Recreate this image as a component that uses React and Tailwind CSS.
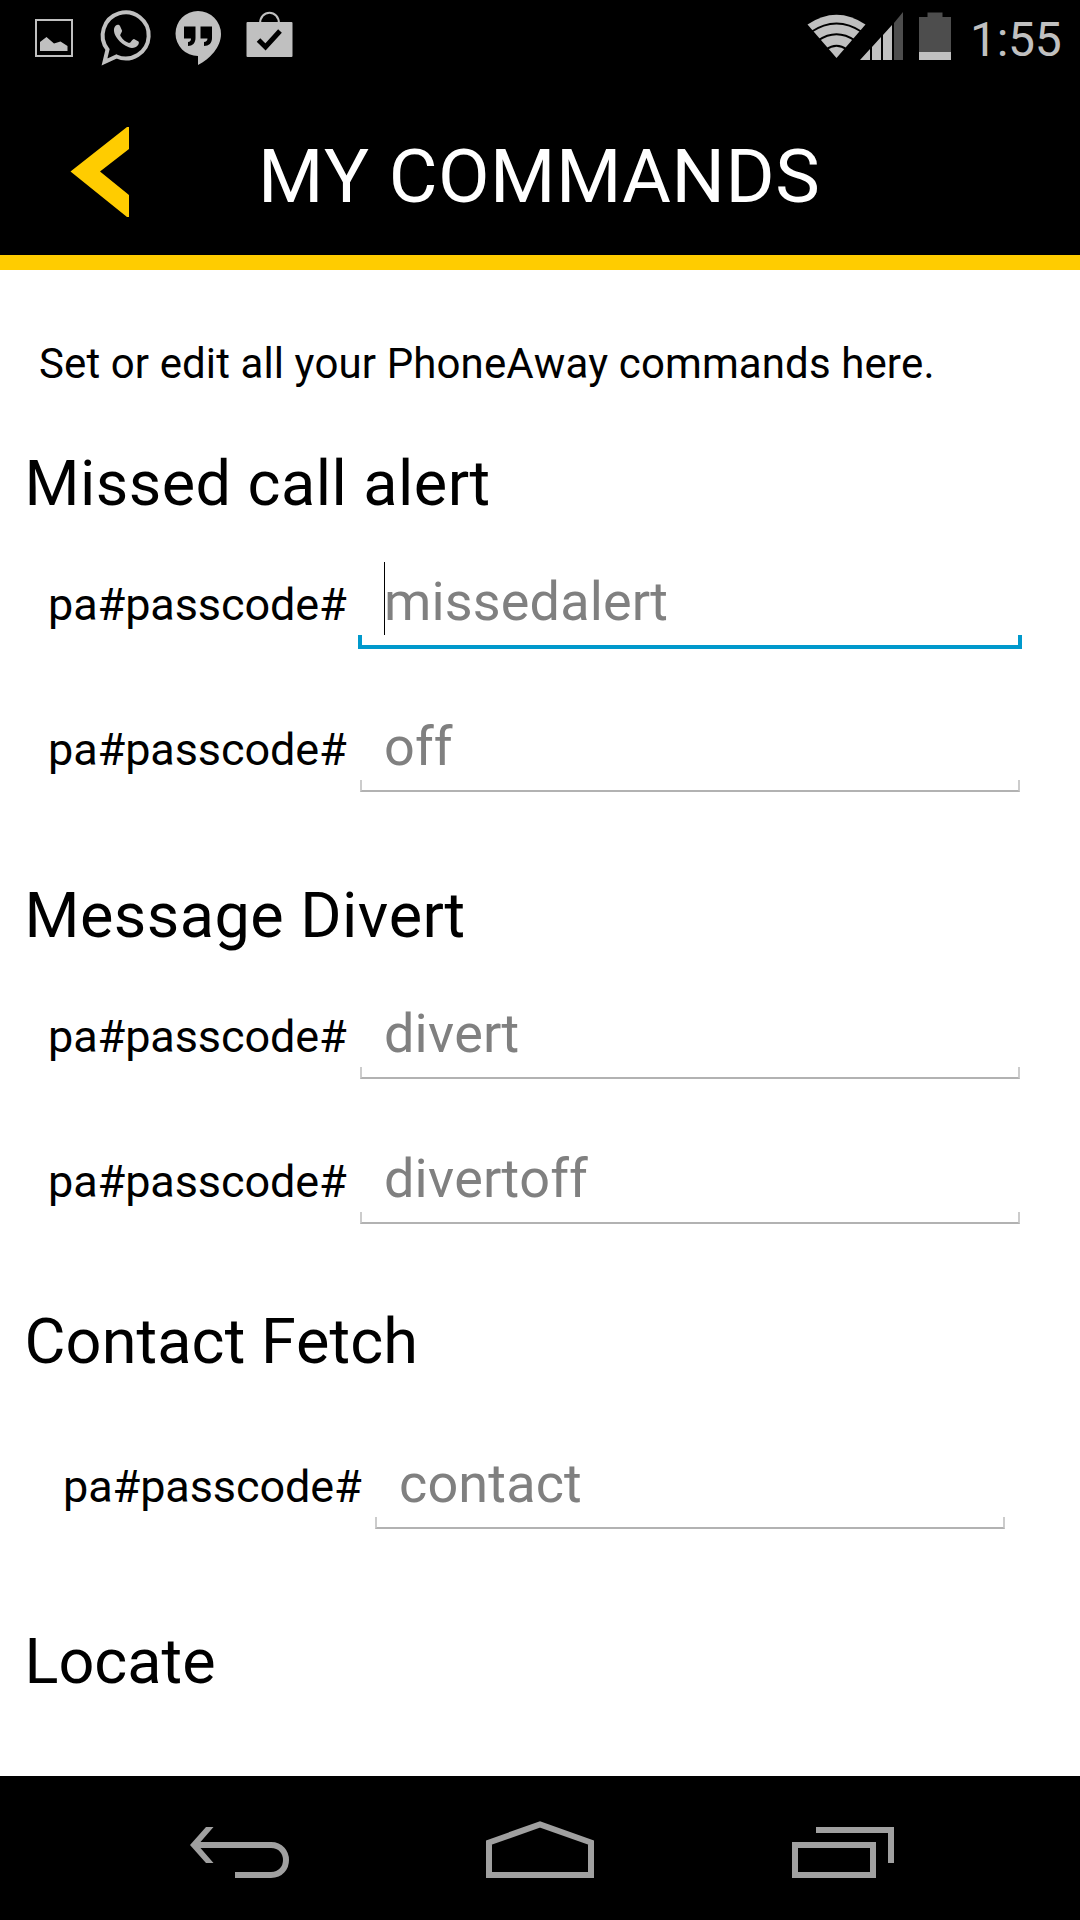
const GROUPS = [
  {
    title: "Missed call alert",
    className: "pt-[38px] tracking-[0.45px]",
    rows: [
      { hint: "missedalert", focused: true, className: "h-[145px]" },
      { hint: "off", className: "h-[145px]" },
    ],
  },
  {
    title: "Message Divert",
    className: "pt-[18px] tracking-[0.45px]",
    rows: [
      { hint: "divert", className: "h-[145px]" },
      { hint: "divertoff", className: "h-[145px]" },
    ],
  },
  {
    title: "Contact Fetch",
    className: "pt-[12px] tracking-[0.1px]",
    rows: [{ hint: "contact", inset: true, className: "h-[169px] pt-[24px]" }],
  },
  { title: "Locate", className: "pt-[27px]", rows: [] },
];

function StatusBar() {
  return (
    <div className="h-[75px] flex items-center justify-between">
      <svg width="320" height="75" viewBox="0 0 320 75" fill="#c0c0c0">
        {/* gallery */}
        <rect x="36" y="20" width="36" height="36" fill="none" stroke="#c0c0c0" strokeWidth="2" />
        <path d="M40 51V42L46.500 37L54 43.500L60.500 41.500L67.500 46V51Z" />
        {/* whatsapp */}
        <path
          d="M104.500 62L107.500 49.500A23 23 0 1 1 116.500 56.500Z"
          fill="none"
          stroke="#c0c0c0"
          strokeWidth="4"
        />
        <path d="M114 29C115 24 119 24 120 26L122 30.500C122.500 32 119.500 34.500 120.500 36C123 40 126 42 129 43C131 43 132 39 134 39L138.500 41.500C140 43.500 137 48 132 48C124 47 113 37 114 29Z" />
        {/* hangouts */}
        <path
          fillRule="evenodd"
          d="M198 11A23 23 0 0 1 221 34C221 47 210 59 198 65V56A22.500 22.500 0 0 1 198 11ZM184 26.500H195.500V38C195.500 43 192.500 46 188 46V42C190 42 191 40.500 191 38.500H184V26.500ZM200.500 26.500H212V38C212 43 209 46 204 46V42C206 42 207.500 40.500 207.500 38.500H200.500Z"
        />
        {/* play store bag */}
        <path d="M260 24C260 9 279 9 279 24" fill="none" stroke="#c0c0c0" strokeWidth="2" />
        <rect x="246.500" y="22" width="46" height="35" rx="1" />
        <path d="M258.500 40L265.500 47L280 31" fill="none" stroke="#000" strokeWidth="5" />
      </svg>
      <div className="flex items-center">
        <svg width="155" height="75" viewBox="800 0 155 75" fill="#c0c0c0">
          <path d="M836.500 58L807.500 24.500Q836.500 5 865.500 24.500Z" />
          <g fill="none" stroke="#000" strokeWidth="2">
            <path d="M811 32Q836.500 15 862 32" />
            <path d="M818 40.500Q836.500 28 855 40.500" />
            <path d="M826 49.500Q836.500 42 847 49.500" />
          </g>
          <path d="M860 60L870 49V60ZM872 60V47L881 37V60ZM883 60V35L892 25V60Z" />
          <path d="M894 60V23L903 12V60Z" fill="#4d4d4d" />
          <path d="M919 52V17H927.500V12.500H942.500V17H951V52Z" fill="#4d4d4d" />
          <rect x="919" y="52" width="32" height="8" />
        </svg>
        <span className="w-[125px] pl-[15px] pt-[3px] text-[48px] leading-[75px] tracking-[-0.3px] text-[#c0c0c0]">1:55</span>
      </div>
    </div>
  );
}

function Header() {
  return (
    <div className="h-[195px] bg-black border-b-[15px] border-[#ffcc00] grid grid-cols-[258px_1fr]">
      <svg width="258" height="180" viewBox="0 75 258 180">
        <path d="M70.500 171.500L127 127H129V149L100 171.500L129 195V217H127Z" fill="#ffcc00" />
      </svg>
      <h1 className="text-white text-[75px] leading-[88px] tracking-[0.5px] pt-[57px] whitespace-nowrap">MY COMMANDS</h1>
    </div>
  );
}

function CommandRow({ row }) {
  return (
    <div className={"flex " + row.className + (row.inset ? " pl-[63px] pr-[75px]" : " pl-[48px] pr-[60px]")}>
      <span className="w-[310px] text-[45px] leading-[54px] tracking-[-0.1px] pt-[27px] whitespace-nowrap">
        pa#passcode#
      </span>
      <div className="relative flex-1 h-[96px]">
        <div className="pl-[26px] pt-[15px] text-[54px] leading-[72px] tracking-[0.15px] text-[#808080] whitespace-nowrap">
          {row.hint}
        </div>
        {row.focused && <div className="absolute left-[26px] top-[11px] w-px h-[73px] bg-black" />}
        {row.focused ? (
          <div className="absolute left-0 right-[-2px] bottom-[-2px] h-[14px] border-4 border-t-0 border-[#0099cc]" />
        ) : (
          <div className="absolute left-[2px] right-0 bottom-0 h-[12px] border-2 border-t-0 border-x-[#cccccc] border-b-[#b2b2b2]" />
        )}
      </div>
    </div>
  );
}

function NavBar() {
  return (
    <div className="h-[144px] bg-black">
      <svg width="1080" height="144" viewBox="0 1776 1080 144" fill="none" stroke="#a0a0a0" strokeWidth="6">
        <path d="M200 1845H271C291 1845 291 1875 271 1875H235" />
        <path d="M190 1845L206 1827H213.500L200.500 1842V1848L213.500 1863H206Z" fill="#a0a0a0" stroke="none" />
        <path d="M489 1875V1842.500L540 1824.500L591 1842.500V1875Z" />
        <rect x="795" y="1845" width="78" height="30" />
        <path d="M816 1830H891V1863" />
      </svg>
    </div>
  );
}

export default function App() {
  return (
    <div className="w-[1080px] h-[1920px] flex flex-col overflow-hidden bg-black font-['Roboto',sans-serif] [font-kerning:none]">
      <StatusBar />
      <Header />
      <div className="flex-1 bg-white text-black overflow-hidden">
        <p className="pl-[39px] pt-[69px] text-[42px] leading-[50px] tracking-[0.1px] whitespace-nowrap">
          Set or edit all your PhoneAway commands here.
        </p>
        {GROUPS.map(group => (
          <div key={group.title} className={group.className}>
            <h2 className="h-[124px] pl-[24.500px] pt-[20px] text-[63px] leading-[74px] whitespace-nowrap">{group.title}</h2>
            {group.rows.map(row => (
              <CommandRow key={row.hint} row={row} />
            ))}
          </div>
        ))}
      </div>
      <NavBar />
    </div>
  );
}
